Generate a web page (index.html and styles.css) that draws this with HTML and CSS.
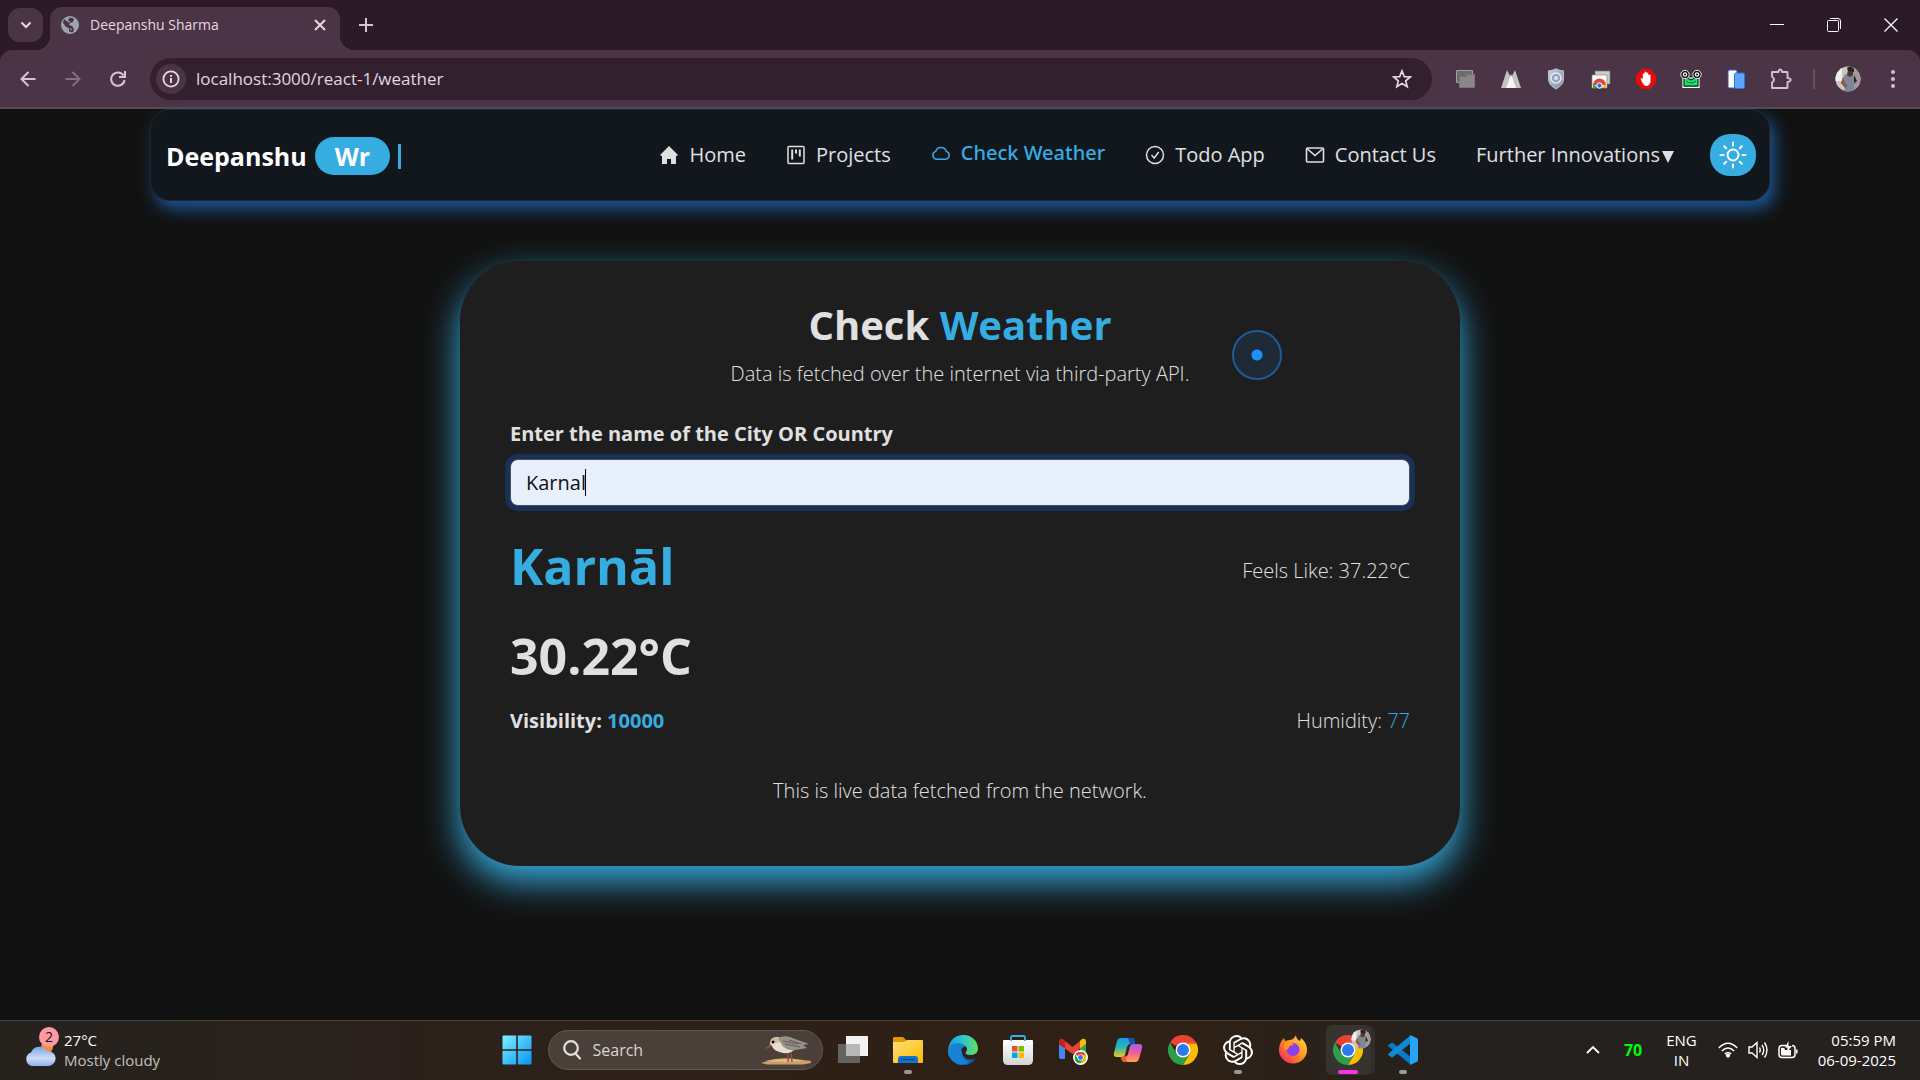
FILE: index.html
```html
<!DOCTYPE html>
<html lang="en">
<head>
<meta charset="utf-8">
<meta name="viewport" content="width=device-width, initial-scale=1">
<title>Deepanshu Sharma</title>
<link rel="stylesheet" href="styles.css">
</head>
<body>
<svg class="defs" width="0" height="0" aria-hidden="true">
  <defs>
    <linearGradient id="win" x1="0" y1="0" x2="1" y2="1"><stop offset="0" stop-color="#7df3ff"/><stop offset="1" stop-color="#0890f8"/></linearGradient>
    <linearGradient id="cloud" x1="0" y1="0" x2="0" y2="1"><stop offset="0" stop-color="#7fa6ea"/><stop offset=".6" stop-color="#cddcf8"/><stop offset="1" stop-color="#8fb0ea"/></linearGradient>
    <linearGradient id="folder" x1="0" y1="0" x2="1" y2="1"><stop offset="0" stop-color="#ffe07a"/><stop offset="1" stop-color="#fdb900"/></linearGradient>
    <linearGradient id="edgeTop" x1="0" y1="0" x2="1" y2="0"><stop offset="0" stop-color="#1f9be0"/><stop offset=".5" stop-color="#2fc4cf"/><stop offset="1" stop-color="#63e05a"/></linearGradient>
    <linearGradient id="edgeLow" x1="0" y1="0" x2="1" y2="1"><stop offset="0" stop-color="#1ea0ea"/><stop offset="1" stop-color="#0b4a94"/></linearGradient>
    <linearGradient id="bag" x1="0" y1="0" x2="0" y2="1"><stop offset="0" stop-color="#fff"/><stop offset="1" stop-color="#d4d4d4"/></linearGradient>
    <linearGradient id="copA" x1="0" y1="0" x2="0" y2="1"><stop offset="0" stop-color="#1899f0"/><stop offset=".5" stop-color="#2fb6b0"/><stop offset="1" stop-color="#f5c81c"/></linearGradient>
    <linearGradient id="copB" x1="0" y1="0" x2="0" y2="1"><stop offset="0" stop-color="#a35bf0"/><stop offset=".5" stop-color="#f0609a"/><stop offset="1" stop-color="#ffa14a"/></linearGradient>
    <linearGradient id="fox" x1="1" y1="0" x2="0" y2="1"><stop offset="0" stop-color="#ffe84a"/><stop offset=".5" stop-color="#ff8a1e"/><stop offset="1" stop-color="#f5156c"/></linearGradient>
    <linearGradient id="shield" x1="0" y1="0" x2="1" y2="1"><stop offset="0" stop-color="#c9d0dc"/><stop offset="1" stop-color="#7d8ba5"/></linearGradient>
    <clipPath id="round"><circle cx="13" cy="13" r="12.5"/></clipPath>
    <symbol id="chrome" viewBox="0 0 48 48">
      <path fill="#ea4335" d="M24 24 3.2 12A24 24 0 0 1 44.8 12z"/>
      <path fill="#fbbc05" d="M24 12h20.8A24 24 0 0 1 24 48l10.4-18z"/>
      <path fill="#2f9e48" d="M3.2 12 13.6 30 24 36l.1 0L34.4 30 24 48A24 24 0 0 1 3.2 12z"/>
      <path fill="#ea4335" d="M3.2 12h41.6v2H24z"/>
      <circle cx="24" cy="24" r="12" fill="#fff"/><circle cx="24" cy="24" r="9.6" fill="#2a7bf0"/>
    </symbol>
    <symbol id="face" viewBox="0 0 26 26">
      <g clip-path="url(#round)"><path fill="#c9c6c4" d="M0 0h26v26H0z"/><path fill="#a09a96" d="M17 0h9v26h-7z"/><path fill="#f0eeec" d="M0 0h7v15H0z"/><path fill="#7d8799" d="m10 8 8 1 4 7-3 3v7H9l1-6-4-3z"/><path fill="#5c3528" d="M13 3q4-3 5 2v4l-3 2-3-2z"/><path fill="#2b211f" d="M12 2q4-3 7 1v3l-6-1zM19 9l3 6-3 2z"/><path fill="#8d5a42" d="m8 11 2 6 3 3-3 2-4-5z"/></g>
    </symbol>
  </defs>
</svg>

<header class="browser">
  <div class="tabstrip">
    <button class="tab-search" aria-label="Search tabs"><svg width="14" height="14" viewBox="0 0 14 14"><path d="m3 5 4 4 4-4" fill="none" stroke="currentColor" stroke-width="2" stroke-linecap="round"/></svg></button>
    <div class="tab">
      <svg width="18" height="18" viewBox="0 0 18 18"><circle cx="9" cy="9" r="9" fill="#9aa5ae"/><path d="M8 2q3-1 5 1l-1 3-3 1-1 2 3 1 2 3-1 3q-3 1-4-1l0-3-3-1-3-4q0-3 2-4l1 2 2 0z" fill="#4a3445"/><path d="m6 5 3 0-1 2zM9 12l2 1-1 2z" fill="#9aa5ae"/></svg>
      <span class="tab-title">Deepanshu Sharma</span>
      <button class="tab-close" aria-label="Close tab"><svg width="12" height="12" viewBox="0 0 12 12"><path d="m1 1 10 10M11 1 1 11" stroke="currentColor" stroke-width="2"/></svg></button>
    </div>
    <button class="new-tab" aria-label="New tab"><svg width="14" height="14" viewBox="0 0 14 14"><path d="M7 0v14M0 7h14" stroke="currentColor" stroke-width="2"/></svg></button>
    <div class="window-buttons">
      <button aria-label="Minimize"><svg width="14" height="14" viewBox="0 0 14 14"><path d="M0 6.500h14" stroke="#fff"/></svg></button>
      <button aria-label="Restore"><svg width="14" height="14" viewBox="0 0 14 14" fill="none" stroke="#fff"><rect x=".5" y="2.500" width="11" height="11" rx="1"/><path d="M3 .5h8q2.500 0 2.500 2.500v8"/></svg></button>
      <button aria-label="Close"><svg width="14" height="14" viewBox="0 0 14 14"><path d="m.5.5 13 13m0-13-13 13" stroke="#fff" stroke-width="1.300"/></svg></button>
    </div>
  </div>
  <div class="toolbar">
    <button class="tool" aria-label="Back"><svg width="16" height="16" viewBox="0 0 16 16" fill="none" stroke="currentColor" stroke-width="2"><path d="M15.500 8H2M8.500 1 1.500 8l7 7"/></svg></button>
    <button class="tool dim" aria-label="Forward"><svg width="16" height="16" viewBox="0 0 16 16" fill="none" stroke="currentColor" stroke-width="2"><path d="M.5 8H14M7.500 1l7 7-7 7"/></svg></button>
    <button class="tool" aria-label="Reload"><svg width="16" height="16" viewBox="0 0 16 16" fill="none" stroke="currentColor" stroke-width="2"><path d="M14.500 9A6.700 6.700 0 1 1 13.500 4.500M15 0v6H9"/></svg></button>
    <div class="omnibox">
      <button class="site-info" aria-label="Site information"><svg width="18" height="18" viewBox="0 0 18 18"><circle cx="9" cy="9" r="7.600" fill="none" stroke="currentColor" stroke-width="1.800"/><path d="M9 8v5M9 5v1.800" stroke="currentColor" stroke-width="2"/></svg></button>
      <input class="url" aria-label="Address" value="localhost:3000/react-1/weather">
      <button class="bookmark" aria-label="Bookmark"><svg width="20" height="20" viewBox="0 0 20 20"><path d="m10 2 2.300 5.600 6 .4-4.600 3.900 1.500 5.900L10 14.600l-5.200 3.200 1.500-5.900L1.700 8l6-.4z" fill="none" stroke="currentColor" stroke-width="1.700"/></svg></button>
    </div>
    <div class="extensions">
      <button class="ext" aria-label="Tab groups"><svg width="20" height="20" viewBox="0 0 20 20"><path fill="#6e6b6e" stroke="#a3a1a3" d="M.5 1.500h16v12H.5z"/><path fill="#8a878a" stroke="#777477" d="M3.500 7.500h7v-2h8v13h-15z"/></svg></button>
      <button class="ext" aria-label="Peaks"><svg width="22" height="20" viewBox="0 0 22 20"><path fill="#c2c2c2" d="M7 1 1 19h20L15 1l-4 8z"/><path fill="#f5f5f5" d="M11 5 6 19h10z"/></svg></button>
      <button class="ext" aria-label="Privacy shield"><svg width="18" height="22" viewBox="0 0 18 22"><path fill="url(#shield)" stroke="#b8c0ce" d="M9 .8q4 2 7.500 2V11q0 6-7.500 10Q1.500 17 1.500 11V2.800Q5 2.800 9 .8z"/><circle cx="9" cy="10" r="5" fill="#94a2ba" stroke="#e6eaf2" stroke-width="1.500"/><circle cx="9" cy="10" r="2" fill="#dde3ec"/></svg></button>
      <button class="ext" aria-label="Web store"><svg width="20" height="20" viewBox="0 0 20 20"><path fill="#ccc" stroke="#777" stroke-width=".7" d="M4 2h15v13H4z"/><path fill="#fff" stroke="#888" stroke-width=".7" d="M1 6h15v13H1z"/><path fill="#ea4335" d="M2 16a6.500 6.500 0 0 1 13 0z"/><path fill="#34a853" d="m2 19 0-4L8 19z"/><path fill="#fbbc05" d="m10 19 5-4v4z"/><circle cx="8.500" cy="16.500" r="2.700" fill="#2a7bf0" stroke="#fff"/></svg></button>
      <button class="ext" aria-label="Ad blocker"><svg width="22" height="22" viewBox="0 0 22 22"><path fill="#e8090c" d="M7 1h8l6 6v8l-6 6H7l-6-6V7z"/><path fill="#fff" d="M5.500 10.500q1.500-1 2.300 1V6q.8-1.300 1.600 0l.2-1.800q.8-1.200 1.600 0L11.600 5q.8-1.200 1.600 0l.2 2q.9-1.200 2.100 0v7q-1 4-4.600 4Q8 17.500 5.500 10.500z"/></svg></button>
      <button class="ext" aria-label="Frog"><svg width="22" height="20" viewBox="0 0 22 20"><path fill="#20cf62" stroke="#fff" stroke-width="1.200" d="M3 9h16v9.500H3z"/><path fill="#20e070" stroke="#111" d="m4 10 3-1 4 2 4-2 3 1v7H4z"/><circle cx="5" cy="5.500" r="4.200" fill="#111" stroke="#eee"/><circle cx="17" cy="5.500" r="4.200" fill="#111" stroke="#eee"/><circle cx="5" cy="5.500" r="2.200" fill="#fff"/><circle cx="17" cy="5.500" r="2.200" fill="#fff"/><path d="M6 12q5 4 10 0" fill="none" stroke="#0a6b30"/><circle cx="5" cy="5.500" r="1"/><circle cx="17" cy="5.500" r="1"/></svg></button>
      <button class="ext" aria-label="Device preview"><svg width="18" height="20" viewBox="0 0 18 20"><rect x="1" y="1" width="9" height="18" rx="1.500" fill="#fff" stroke="#1d5fbf"/><rect x="7.500" y="4" width="10" height="15.500" rx="1.500" fill="#60a5ff" stroke="#2b74e0"/></svg></button>
      <button class="ext" aria-label="Extensions"><svg width="22" height="22" viewBox="0 0 22 22" fill="none" stroke="#d9bdd2" stroke-width="1.900" stroke-linejoin="round"><path d="M2 4h6.500V3q1.500-3 3.500 0v1h5.500v6q4 .5 3 2.500-1 1.500-3 1.500v6H2v-5.500q4-2.500 0-6z"/></svg></button>
      <span class="divider"></span>
      <button class="ext" aria-label="Profile"><svg width="26" height="26"><use href="#face"/></svg></button>
      <button class="ext" aria-label="Menu"><svg width="4" height="20" viewBox="0 0 4 20" fill="#d9bdd2"><circle cx="2" cy="3" r="2"/><circle cx="2" cy="10" r="2"/><circle cx="2" cy="17" r="2"/></svg></button>
    </div>
  </div>
</header>

<main class="page">
  <nav class="navbar">
    <a class="brand" href="#">Deepanshu <span class="pill">Wr</span><span class="type-bar"></span></a>
    <div class="nav-links">
      <a class="nav-link" href="#"><svg width="20" height="20" viewBox="0 0 20 20" fill="currentColor"><path d="m10 1 9 9-1.500 1H17v8h-5v-5H8v5H3v-8h-.5L1 10z"/></svg>Home</a>
      <a class="nav-link" href="#"><svg width="20" height="20" viewBox="0 0 20 20" fill="none" stroke="currentColor" stroke-width="1.500"><rect x="2" y="1.500" width="16" height="17" rx="1"/><path d="M6.200 4.500v10M10 4.500v4M13.800 4.500v7" stroke-width="2"/></svg>Projects</a>
      <a class="nav-link active" href="#"><svg width="20" height="20" viewBox="0 0 20 20" fill="none" stroke="currentColor" stroke-width="1.500"><path d="M5.500 16.200A4 4 0 0 1 4.700 8.400 5.600 5.600 0 0 1 15.300 8.400 4 4 0 0 1 14.700 16.200z"/></svg>Check Weather</a>
      <a class="nav-link" href="#"><svg width="20" height="20" viewBox="0 0 20 20" fill="none" stroke="currentColor" stroke-width="1.500"><circle cx="10" cy="10" r="8.500"/><path d="m6.500 10 2.700 3 4.500-6"/></svg>Todo App</a>
      <a class="nav-link" href="#"><svg width="20" height="20" viewBox="0 0 20 20" fill="none" stroke="currentColor" stroke-width="1.600"><rect x="1.500" y="3" width="17" height="14" rx="1"/><path d="m2.500 4 7.500 6.500L17.500 4"/></svg>Contact Us</a>
      <a class="nav-link" href="#">Further Innovations<svg class="caret-down" width="12" height="12" viewBox="0 0 12 12" fill="currentColor"><path d="M0 0h12L6 12z"/></svg></a>
      <button class="theme" aria-label="Toggle theme"><svg width="28" height="28" viewBox="0 0 28 28" fill="none" stroke="#fff" stroke-width="2" stroke-linecap="round"><circle cx="14" cy="14" r="5.500"/><path d="M14 1.500v3M14 23.500v3M1.500 14h3M23.500 14h3M5.200 5.200l2 2M20.800 20.800l2 2M5.200 22.800l2-2M20.800 7.200l2-2"/></svg></button>
    </div>
  </nav>

  <section class="card">
    <h1>Check <span class="accent">Weather</span></h1>
    <p class="lead">Data is fetched over the internet via third-party API.</p>
    <label class="label" for="city">Enter the name of the City OR Country</label>
    <div class="field">
      <input id="city" class="city" value="Karnal">
      <span class="text-caret"></span>
    </div>
    <div class="row">
      <h2 class="accent">Karnāl</h2>
      <p>Feels Like: 37.22°C</p>
    </div>
    <h2>30.22°C</h2>
    <div class="row details">
      <strong>Visibility: <span class="accent">10000</span></strong>
      <p>Humidity: <span class="accent">77</span></p>
    </div>
    <p class="note">This is live data fetched from the network.</p>
  </section>
  <div class="pointer"></div>
</main>

<footer class="taskbar">
  <button class="weather">
    <span class="weather-icon">
      <svg width="32" height="30" viewBox="0 0 32 30"><circle cx="23" cy="10" r="6" fill="#ff8a2a"/><path fill="url(#cloud)" d="M8 29a7 7 0 0 1-1-13.500A9 9 0 0 1 23 14a7.500 7.500 0 0 1 2 15z"/></svg>
      <span class="badge">2</span>
    </span>
    <span class="two-lines">27°C<span class="muted">Mostly cloudy</span></span>
  </button>
  <div class="apps">
    <button class="app" aria-label="Start"><svg width="30" height="30" viewBox="0 0 30 30" fill="url(#win)"><path d="M1.500.5h12.700v13.700H.5V1.500q0-1 1-1zM15.800.5h12.700q1 0 1 1v12.700H15.800zM.5 15.800h13.700v13.700H1.500q-1 0-1-1zM15.800 15.800h13.700v12.700q0 1-1 1H15.800z"/></svg></button>
    <button class="search">
      <svg width="18" height="20" viewBox="0 0 18 20" fill="none" stroke="#e4e1de" stroke-width="2.200" stroke-linecap="round"><circle cx="8" cy="8" r="6.800"/><path d="m12.500 13.500 4.500 5"/></svg>
      <span>Search</span>
      <svg class="bird" width="51" height="30" viewBox="0 0 51 30"><path fill="#c8a066" d="M0 28q16-6 31-4.500l19 2.500v2l-8 1.500H6z"/><path fill="#e0bc80" d="M4 26q18-4 40 0l-20 1z"/><path d="M27 17v10M30 17l1 10" stroke="#9c4f38" stroke-width="1.500"/><path fill="#8b4f3c" d="m10 8-7 6.500L10 12z"/><path fill="#e8ddcf" d="M9 9q0-7 7-7 4 0 6 4l12 8q-4 5-12 4-10-2-11-7z"/><path fill="#d0ba96" d="M10 5q3-4 8-2l1 4-5 1z"/><path fill="#97918b" d="M17 3q8-4 17 1l14 5-6 1 4 3-12 2q-9 1-13-5z"/><path d="m22 6 15 3M24 9l15 3M28 5l12 4" stroke="#5e5a57" fill="none"/><circle cx="12" cy="7" r="1.500"/></svg>
    </button>
    <button class="app" aria-label="Task view"><svg width="30" height="30" viewBox="0 0 30 30"><path fill="#656361" d="M0 9h22v19H0z"/><path fill="#f2f2f2" d="M8 1h22v20H8z"/><path fill="#b9b8b7" d="M8 9h14v12H8z"/></svg></button>
    <button class="app running" aria-label="File Explorer"><svg width="30" height="30" viewBox="0 0 30 30"><path fill="#e09a00" d="M0 3q0-1 1-1h9l3 3v5H0z"/><path fill="url(#folder)" d="M0 7h11l3-2h15q1 0 1 1v21q0 1-1 1H1q-1 0-1-1z"/><path fill="#1274cc" d="M5 28v-4q0-3 3-3h14q3 0 3 3v4z"/><path d="M8 24.500h14" stroke="#0a4d94" stroke-width="1.500"/></svg></button>
    <button class="app" aria-label="Edge"><svg width="30" height="30" viewBox="0 0 30 30"><path fill="url(#edgeLow)" d="M0 14A15 15 0 0 0 25 26.500q2-2 2-3-5 2-9 0-5-3-4-8z"/><path fill="url(#edgeTop)" d="M0 14Q3 0 15 0a14 14 0 0 1 15 13q0 7-7 7-4 0-5-1-1-1 0-2 3-5-3-7-6-2-11 1z"/><path fill="#1a82d4" d="M0 15Q2 8 9 8q7 0 8 4-4 0-4 5 0 9 9 10-5 3.500-11 2Q0 25 0 15z"/></svg></button>
    <button class="app" aria-label="Store"><svg width="30" height="30" viewBox="0 0 30 30"><path fill="url(#bag)" d="M0 6q0-1 1-1h28q1 0 1 1v19q0 5-5 5H5q-5 0-5-5z"/><path d="M8 6V2.500Q8 1 9.500 1h11Q22 1 22 2.500V6" fill="none" stroke="#28b4ea" stroke-width="1.800"/><path fill="#f25022" d="M9 11h5.500v5.500H9z"/><path fill="#7fba00" d="M15.500 11H21v5.500h-5.500z"/><path fill="#00a4ef" d="M9 17.500h5.500V23H9z"/><path fill="#ffb900" d="M15.500 17.500H21V23h-5.500z"/></svg></button>
    <button class="app" aria-label="Gmail"><svg width="30" height="30" viewBox="0 0 30 30"><path fill="#4285f4" d="M1 9l6 4v11H3q-2 0-2-2z"/><path fill="#34a853" d="M22 13l6-4v13q0 2-2 2h-4z"/><path fill="#ea4335" d="M7 6l7.500 6L22 6v7.500L14.500 19 7 13.500z"/><path fill="#c5221f" d="M1 7q0-4 4-3l2 2v7.500L1 9z"/><path fill="#fbbc04" d="M28 7q0-4-4-3l-2 2v7.500L28 9z"/><circle cx="22.500" cy="22.500" r="7.500" fill="#fff"/><use href="#chrome" x="16.500" y="16.500" width="12" height="12"/></svg></button>
    <button class="app" aria-label="Copilot"><svg width="30" height="30" viewBox="0 0 30 30"><path fill="url(#copA)" d="M7 3h11q3 0 3.500 3l.5 3h-4q-3 0-4 3l-2 8q-1 2-3 2H4q-4 0-3-4L4 6q1-3 3-3z"/><path fill="url(#copB)" d="M23 27H12q-3 0-3.500-3l-.5-2h3q3 0 4-3l2-8q1-2 3-2h6q4 0 3 4l-3 11q-1 3-3 3z"/><path fill="#1453b5" d="M15 3h3q3 0 3.500 3l.5 3h-5z"/><path fill="#ee5a35" d="M8 22q3 0 4-2l2 7h-2q-3 0-4-5z"/></svg></button>
    <button class="app" aria-label="Chrome"><svg width="30" height="30"><use href="#chrome"/></svg></button>
    <button class="app running" aria-label="ChatGPT"><svg width="30" height="30" viewBox="0 0 24 24" fill="#fff"><path d="M22.282 9.821a5.985 5.985 0 0 0-.516-4.910 6.046 6.046 0 0 0-6.510-2.900A6.065 6.065 0 0 0 4.981 4.182a5.985 5.985 0 0 0-3.998 2.900 6.046 6.046 0 0 0 .743 7.097 5.980 5.980 0 0 0 .510 4.911 6.051 6.051 0 0 0 6.515 2.900A5.985 5.985 0 0 0 13.260 24a6.056 6.056 0 0 0 5.772-4.206 5.990 5.990 0 0 0 3.998-2.900 6.056 6.056 0 0 0-.748-7.073zM13.260 22.430a4.476 4.476 0 0 1-2.876-1.040l.141-.081 4.779-2.758a.795.795 0 0 0 .393-.681v-6.737l2.020 1.168a.071.071 0 0 1 .038.052v5.583a4.504 4.504 0 0 1-4.495 4.494zM3.600 18.304a4.471 4.471 0 0 1-.535-3.014l.142.085 4.783 2.759a.771.771 0 0 0 .780 0l5.843-3.369v2.332a.080.080 0 0 1-.033.062L9.740 19.950a4.500 4.500 0 0 1-6.140-1.646zM2.340 7.896a4.485 4.485 0 0 1 2.366-1.973V11.600a.766.766 0 0 0 .388.677l5.815 3.354-2.020 1.169a.076.076 0 0 1-.071 0l-4.830-2.787A4.504 4.504 0 0 1 2.340 7.872zm16.597 3.855l-5.833-3.387L15.119 7.200a.076.076 0 0 1 .071 0l4.830 2.791a4.494 4.494 0 0 1-.676 8.105v-5.678a.790.790 0 0 0-.407-.667zm2.010-3.023l-.141-.085-4.774-2.782a.776.776 0 0 0-.785 0L9.409 9.230V6.897a.066.066 0 0 1 .028-.061l4.830-2.787a4.500 4.500 0 0 1 6.680 4.660zm-12.640 4.135l-2.020-1.164a.080.080 0 0 1-.038-.057V6.075a4.500 4.500 0 0 1 7.375-3.453l-.142.080L8.704 5.460a.795.795 0 0 0-.393.681zm1.097-2.365l2.602-1.500 2.607 1.500v2.999l-2.597 1.500-2.607-1.500z"/></svg></button>
    <button class="app" aria-label="Firefox"><svg width="30" height="30" viewBox="0 0 30 30"><path fill="url(#fox)" d="M18 0q0 4 4 6l1-3q6 5 6 12a14 13.500 0 0 1-28 0q0-7 5-12l1 3 4-1q5 0 7-5z"/><circle cx="15" cy="14.500" r="6.500" fill="#8a3ff0"/><path fill="#ff9a20" d="M7 8q6-2 9 2-4 0-5 2-1 3-4 3-2-3 0-7z"/></svg></button>
    <button class="app running current" aria-label="Chrome, open window"><svg width="30" height="30"><use href="#chrome"/></svg><svg class="profile" width="20" height="20"><use href="#face"/></svg></button>
    <button class="app running" aria-label="Visual Studio Code"><svg width="30" height="30" viewBox="0 0 30 30"><path fill="#0b78c4" d="M1 9.500 3 8q1-.5 2 0l18 14v8L0 11q0-.8 1-1.500z"/><path fill="#0f8ad8" d="M1 20.500 3 22q1 .5 2 0L23 8V0L0 19q0 .8 1 1.500z"/><path fill="#25a5f3" d="M22 0l6.500 3q1.500.7 1.500 2v20q0 1.300-1.500 2L22 30z"/></svg></button>
  </div>
  <div class="tray">
    <button aria-label="Show hidden icons"><svg width="14" height="9" viewBox="0 0 14 9"><path d="m1 8 6-6 6 6" fill="none" stroke="#fff" stroke-width="1.800"/></svg></button>
    <strong class="level">70</strong>
    <button class="two-lines language">ENG<span>IN</span></button>
    <button class="status" aria-label="Network, volume and battery">
      <svg width="20" height="16" viewBox="0 0 20 16" fill="none" stroke="#fff" stroke-width="1.500"><path d="M.8 6q9.200-9.500 18.400 0M3.800 9q6.200-6 12.400 0M6.800 12q3.200-3 6.400 0"/><circle cx="10" cy="13.500" r="1.400" fill="#fff"/></svg>
      <svg width="20" height="18" viewBox="0 0 20 18" fill="none" stroke="#fff" stroke-width="1.400"><path d="M1 6h3l5-4.500v15L4 12H1zM11.500 6.500q1.500 2.500 0 5M14 4q3.500 5 0 10M16.500 1.500q5 7.500 0 15"/></svg>
      <svg width="20" height="18" viewBox="0 0 20 18"><path d="M8 4.500H4q-3 0-3 3v6q0 3 3 3h10q3 0 3-3v-6q0-3-3-3M18.800 8.500v4" fill="none" stroke="#fff" stroke-width="1.500"/><path fill="#fff" d="M3 7q4-1 4 2h6v5.500H4.500Q3 14.500 3 13zM10.500 0v5h3.500L9 11l.5-4.500H7z"/></svg>
    </button>
    <button class="two-lines clock">05:59 PM<span>06-09-2025</span></button>
  </div>
</footer>
</body>
</html>
```
FILE: styles.css
```css
* { box-sizing: border-box; }

body {
  margin: 0;
  min-height: 100vh;
  display: flex;
  flex-direction: column;
  background: #121212;
  color: #e0e0e0;
  font: 20px/30px "Open Sans", sans-serif;
}

h1, h2, p { margin: 0; }
a { color: inherit; text-decoration: none; }
svg { display: block; flex: none; }
.defs { position: absolute; }

button {
  padding: 0;
  border: 0;
  background: none;
  color: inherit;
  font: inherit;
  display: flex;
  align-items: center;
  justify-content: center;
}

/* Browser window */
.browser {
  background: #2c1a29;
  border-bottom: 2px solid #5a4a54;
  color: #e8d6e3;
}

.tabstrip {
  display: flex;
  align-items: center;
  height: 50px;
  padding: 0 1px 0 8px;
}

.tab-search {
  width: 35px;
  height: 34px;
  border-radius: 12px;
  background: #4a3445;
}

.tab {
  position: relative;
  align-self: flex-end;
  display: flex;
  align-items: center;
  gap: 11px;
  width: 290px;
  height: 43px;
  margin-left: 7px;
  padding: 0 14px 7px 11px;
  border-radius: 12px 12px 0 0;
  background: #4a3445;
}

.tab::before,
.tab::after {
  content: "";
  position: absolute;
  bottom: 0;
  width: 14px;
  height: 14px;
}

.tab::before {
  right: 100%;
  background: radial-gradient(circle at 0 0, transparent 14px, #4a3445 14px);
}

.tab::after {
  left: 100%;
  background: radial-gradient(circle at 100% 0, transparent 14px, #4a3445 14px);
}

.tab-title {
  flex: 1;
  font-size: 14px;
}

.new-tab { margin-left: 19px; color: #dcc0d5; }

.window-buttons {
  display: flex;
  margin-left: auto;
}

.window-buttons button { width: 57px; height: 50px; }

.toolbar {
  display: flex;
  align-items: center;
  height: 57px;
  padding-left: 5px;
  border-radius: 12px 12px 0 0;
  background: #4a3445;
}

.tool { width: 45px; height: 45px; color: #dcc0d5; }
.dim { color: #866d80; }

.omnibox {
  flex: 1;
  display: flex;
  align-items: center;
  height: 42px;
  margin-left: 10px;
  padding: 0 20px 0 6px;
  border-radius: 21px;
  background: #33202e;
}

.site-info {
  width: 30px;
  height: 30px;
  border-radius: 15px;
  background: #4a3445;
}

.url {
  flex: 1;
  min-width: 0;
  margin-left: 10px;
  padding: 0;
  border: 0;
  outline: 0;
  background: none;
  color: #e4d5e0;
  font: 17px/30px "Open Sans", sans-serif;
}

.extensions {
  display: flex;
  align-items: center;
  padding: 0 5px 0 11px;
}

.ext { width: 45px; height: 45px; }

.divider {
  width: 2px;
  height: 20px;
  margin: 0 10px;
  background: #68505f;
}

/* Site */
.page {
  position: relative;
  flex: 1;
}

.navbar {
  display: flex;
  align-items: center;
  justify-content: space-between;
  max-width: 1620px;
  min-height: 92px;
  margin: 0 auto;
  padding: 0 13px 0 15px;
  border: 1px solid #22272c;
  border-radius: 20px;
  background: #12171e;
  box-shadow: 5px 8px 16px #1a5796;
}

.brand {
  display: flex;
  align-items: center;
  gap: 8px;
  padding-top: 2px;
  color: #fff;
  font-size: 25px;
  font-weight: 700;
}

.pill {
  padding: 4px 20px;
  border-radius: 20px;
  background: #35ade1;
}

.type-bar {
  width: 3px;
  height: 25px;
  background: #35ade1;
}

.nav-links {
  display: flex;
  align-items: center;
  gap: 40px;
}

.nav-link {
  display: flex;
  align-items: center;
  gap: 10px;
}

.nav-link.active {
  color: #35ade1;
  font-family: "Noto Sans", sans-serif;
  font-weight: 500;
  transform: translateY(-2px);
}

.caret-down { margin: 3px 0 0 -8px; }

.theme {
  width: 46px;
  height: 42px;
  margin-left: -4px;
  border-radius: 20px;
  background: #35ade1;
}

.card {
  max-width: 1000px;
  margin: 60px auto;
  padding: 40px 50px 60px;
  border-radius: 60px;
  background: #1e1e1e;
  box-shadow: 0 15px 35px #35ade1;
  font-weight: 300;
}

.card h1 {
  margin-bottom: 10px;
  font-size: 40px;
  line-height: 48px;
  text-align: center;
}

.card h2 {
  font-size: 50px;
  line-height: 60px;
}

.lead, .note { text-align: center; }
.accent { color: #35ade1; }

.label {
  display: block;
  margin: 30px 0 10px;
  font-weight: 700;
}

.field {
  position: relative;
  margin-bottom: 30px;
}

.city {
  display: block;
  width: 100%;
  height: 47px;
  padding: 0 15px;
  border: 1px solid #495057;
  border-radius: 8px;
  outline: 0;
  background: #e8f0fe;
  box-shadow: 0 0 0 5px #1a3157;
  color: #111;
  font: 20px/30px "Open Sans", sans-serif;
}

.text-caret {
  position: absolute;
  top: 10px;
  left: 75px;
  width: 1px;
  height: 27px;
  background: #000;
}

.row {
  display: flex;
  align-items: center;
  justify-content: space-between;
  margin-bottom: 20px;
}

.row h2 { padding-bottom: 10px; }
.details { margin: 20px 0 40px; }
.details strong { font-weight: 700; }

/* Custom mouse pointer that floats over the page */
.pointer {
  position: absolute;
  left: 1232px;
  top: 221px;
  width: 50px;
  height: 50px;
  border: 2px solid #1d5b9b;
  border-radius: 50%;
  background: radial-gradient(circle, #1e90ff 5px, #1e2a35 6px);
}

/* Taskbar */
.taskbar {
  display: grid;
  grid-template-columns: 1fr auto 1fr;
  align-items: center;
  height: 60px;
  padding: 0 24px 2px;
  border-top: 1px solid #4a433d;
  background: linear-gradient(90deg, #25221e, #2c211b 25%, #2e2016 45%, #2f2116 62%, #25211e 75%, #25211e);
  color: #fff;
  font-size: 15px;
  line-height: 20px;
}

.weather { justify-self: start; gap: 8px; }

.weather-icon {
  position: relative;
  padding-top: 4px;
}

.badge {
  position: absolute;
  top: -6px;
  right: -3px;
  width: 20px;
  height: 20px;
  border-radius: 10px;
  background: #ff98a3;
  color: #111;
  font-size: 14px;
}

.two-lines {
  display: flex;
  flex-direction: column;
  align-items: flex-start;
  justify-content: center;
}

.muted { color: #c3c0bd; }
.apps { display: flex; align-items: center; }

.app {
  position: relative;
  width: 55px;
  height: 50px;
}

.running::after {
  content: "";
  position: absolute;
  bottom: 1px;
  width: 8px;
  height: 4px;
  border-radius: 2px;
  background: #9b9895;
}

.current {
  width: 45px;
  margin: 0 5px;
  border-radius: 6px;
  background: #37332f;
  box-shadow: 5px 0 0 -1px #312d29;
}

.current::after { width: 20px; background: #fb32e8; }

.profile {
  position: absolute;
  top: 4px;
  right: 0;
}

.search {
  gap: 12px;
  justify-content: flex-start;
  width: 275px;
  height: 40px;
  margin: 0 3px;
  padding: 0 10px 0 14px;
  border: 1px solid #625952;
  border-radius: 20px;
  background: #4a4039;
  color: #d9d6d3;
  font-size: 16px;
}

.bird { margin-left: auto; }

.tray {
  justify-self: end;
  display: flex;
  align-items: center;
}

.level {
  margin-left: 24px;
  color: #0f0;
  font-size: 16px;
}

.language { margin-left: 24px; align-items: center; }
.status { gap: 10px; margin: 0 20px 0 21px; }
.clock { align-items: flex-end; }
```
